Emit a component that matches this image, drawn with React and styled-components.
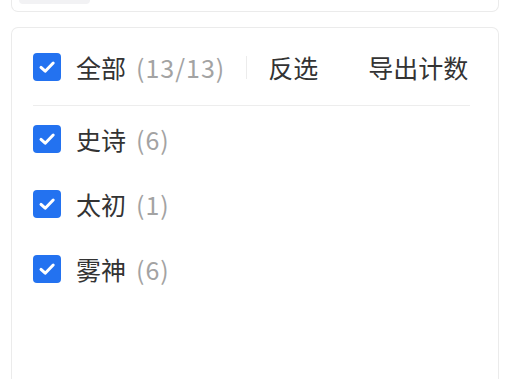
import React, { useState } from 'react';
import styled, { createGlobalStyle } from 'styled-components';

const GlobalStyle = createGlobalStyle`
    body {
        margin: 0;
        background: #ffffff;
        font-family: "Noto Sans CJK SC", "Noto Sans", sans-serif;
        color: #333333;
    }
`;

const Page = styled.div`
    display: flex;
    flex-direction: column;
    gap: 15px;
    padding: 0 21px 0 11px;
    height: 379px;
    overflow: hidden;
`;

const TopCard = styled.div`
    height: 11px;
    border: 1px solid #ebebeb;
    border-top: none;
    border-radius: 0 0 7px 7px;
    padding-left: 7px;
`;

const TopBar = styled.div`
    width: 71px;
    height: 4px;
    background: #f2f2f4;
    border-radius: 0 0 4px 4px;
`;

const Card = styled.div`
    flex: 1;
    border: 1px solid #ebebeb;
    border-bottom: none;
    border-radius: 7px 7px 0 0;
    padding: 25px 28px 0 21px;
`;

const Header = styled.div`
    display: flex;
    align-items: center;
    height: 28px;
    padding-bottom: 24px;
    border-bottom: 1px solid #ededed;
    white-space: nowrap;
`;

const Item = styled.label`
    display: flex;
    align-items: center;
    flex: none;
    gap: 15px;
    height: 28px;
    font-size: 25px;
    line-height: 28px;
    white-space: nowrap;
    cursor: pointer;
`;

const Box = styled.span`
    width: 28px;
    height: 28px;
    flex: none;
    border-radius: 4px;
    background: ${p => (p.$on ? '#2372f0' : '#ffffff')};
    border: ${p => (p.$on ? 'none' : '1px solid #c8c8c8')};
    display: flex;
    align-items: center;
    justify-content: center;
`;

const Count = styled.span`
    color: #a3a3a3;
    margin-left: -5px;
    letter-spacing: 1px;
`;

const Sep = styled.span`
    width: 1px;
    height: 23px;
    flex: none;
    background: #ececec;
    margin: 0 21px 0 21px;
`;

const Action = styled.button`
    flex: none;
    border: none;
    background: none;
    padding: 0;
    font: inherit;
    font-size: 25px;
    line-height: 28px;
    white-space: nowrap;
    color: #333333;
    cursor: pointer;
    margin-right: ${p => p.$gap || 0}px;
`;

const List = styled.div`
    display: flex;
    flex-direction: column;
    gap: 37px;
    padding-top: 19px;
`;

function Check({ on }) {
    return (
        <Box $on={on}>
            {on && (
                <svg width="20" height="20" viewBox="0 0 20 20">
                    <path d="M4 10.4 L8.2 14.2 L16.2 6" fill="none" stroke="#fff" strokeWidth="3" strokeLinecap="round" strokeLinejoin="round" />
                </svg>
            )}
        </Box>
    );
}

const groups = [
    { name: '史诗', count: 6 },
    { name: '太初', count: 1 },
    { name: '雾神', count: 6 },
];

export default function App() {
    const [checked, setChecked] = useState(groups.map(() => true));
    const all = checked.every(Boolean);
    const total = groups.reduce((s, g) => s + g.count, 0);
    const picked = groups.reduce((s, g, i) => s + (checked[i] ? g.count : 0), 0);

    return (
        <>
            <GlobalStyle />
            <Page>
                <TopCard>
                    <TopBar />
                </TopCard>
                <Card>
                    <Header>
                        <Item onClick={() => setChecked(groups.map(() => !all))}>
                            <Check on={all} />
                            全部 <Count>({picked}/{total})</Count>
                        </Item>
                        <Sep />
                        <Action $gap={50} onClick={() => setChecked(checked.map(c => !c))}>反选</Action>
                        <Action>导出计数</Action>
                    </Header>
                    <List>
                        {groups.map((g, i) => (
                            <Item key={g.name} onClick={() => setChecked(checked.map((c, j) => (j === i ? !c : c)))}>
                                <Check on={checked[i]} />
                                {g.name} <Count>({g.count})</Count>
                            </Item>
                        ))}
                    </List>
                </Card>
            </Page>
        </>
    );
}
